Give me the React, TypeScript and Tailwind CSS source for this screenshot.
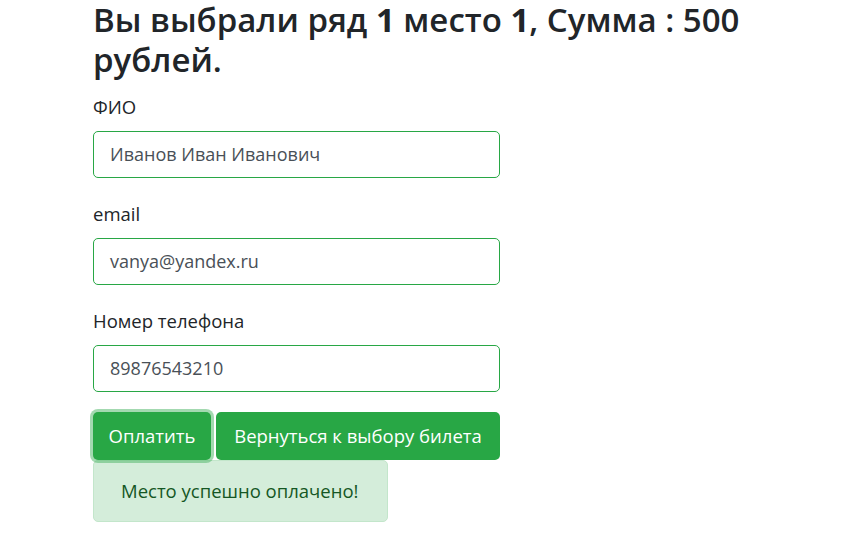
import React from "react";

const font = { fontFamily: '"Open Sans", "Noto Sans", sans-serif' };

function Field({ label, value }: { label: string; value: string }) {
    return (
        <div className="mb-[24px]">
            <label className="block text-[18.5px] leading-[24px] mb-[12px] text-[#212529]">{label}</label>
            <div className="h-[47px] w-[407px] rounded-[5px] border border-[#28a745] px-[16px] flex items-center text-[18px] text-[#495057]">
                {value}
            </div>
        </div>
    );
}

export default function App() {
    return (
        <div className="min-h-screen bg-white pl-[93px] text-[#212529]" style={font}>
            <h2 className="text-[33px] leading-[40px] font-semibold w-[720px] mb-[15px]">
                Вы выбрали ряд <b className="font-bold">1</b> место <b className="font-bold">1</b>, Сумма : 500 рублей.
            </h2>

            <Field label="ФИО" value="Иванов Иван Иванович" />
            <Field label="email" value="vanya@yandex.ru" />
            <Field label="Номер телефона" value="89876543210" />

            <div className="flex gap-[5px] -mt-[4px]">
                <button className="relative z-10 h-[48px] w-[118px] flex items-center justify-center rounded-[5px] bg-[#28a745] text-white text-[18.5px] shadow-[0_0_0_3px_rgba(72,180,97,0.5)]">
                    Оплатить
                </button>
                <button className="h-[48px] w-[284px] flex items-center justify-center rounded-[5px] bg-[#28a745] text-white text-[18.5px]">
                    Вернуться к выбору билета
                </button>
            </div>

            <div className="flex items-center h-[62px] w-[295px] pl-[27px] rounded-[5px] border border-[#c3e6cb] bg-[#d4edda] text-[#155724] text-[18.5px]">
                Место успешно оплачено!
            </div>
        </div>
    );
}
